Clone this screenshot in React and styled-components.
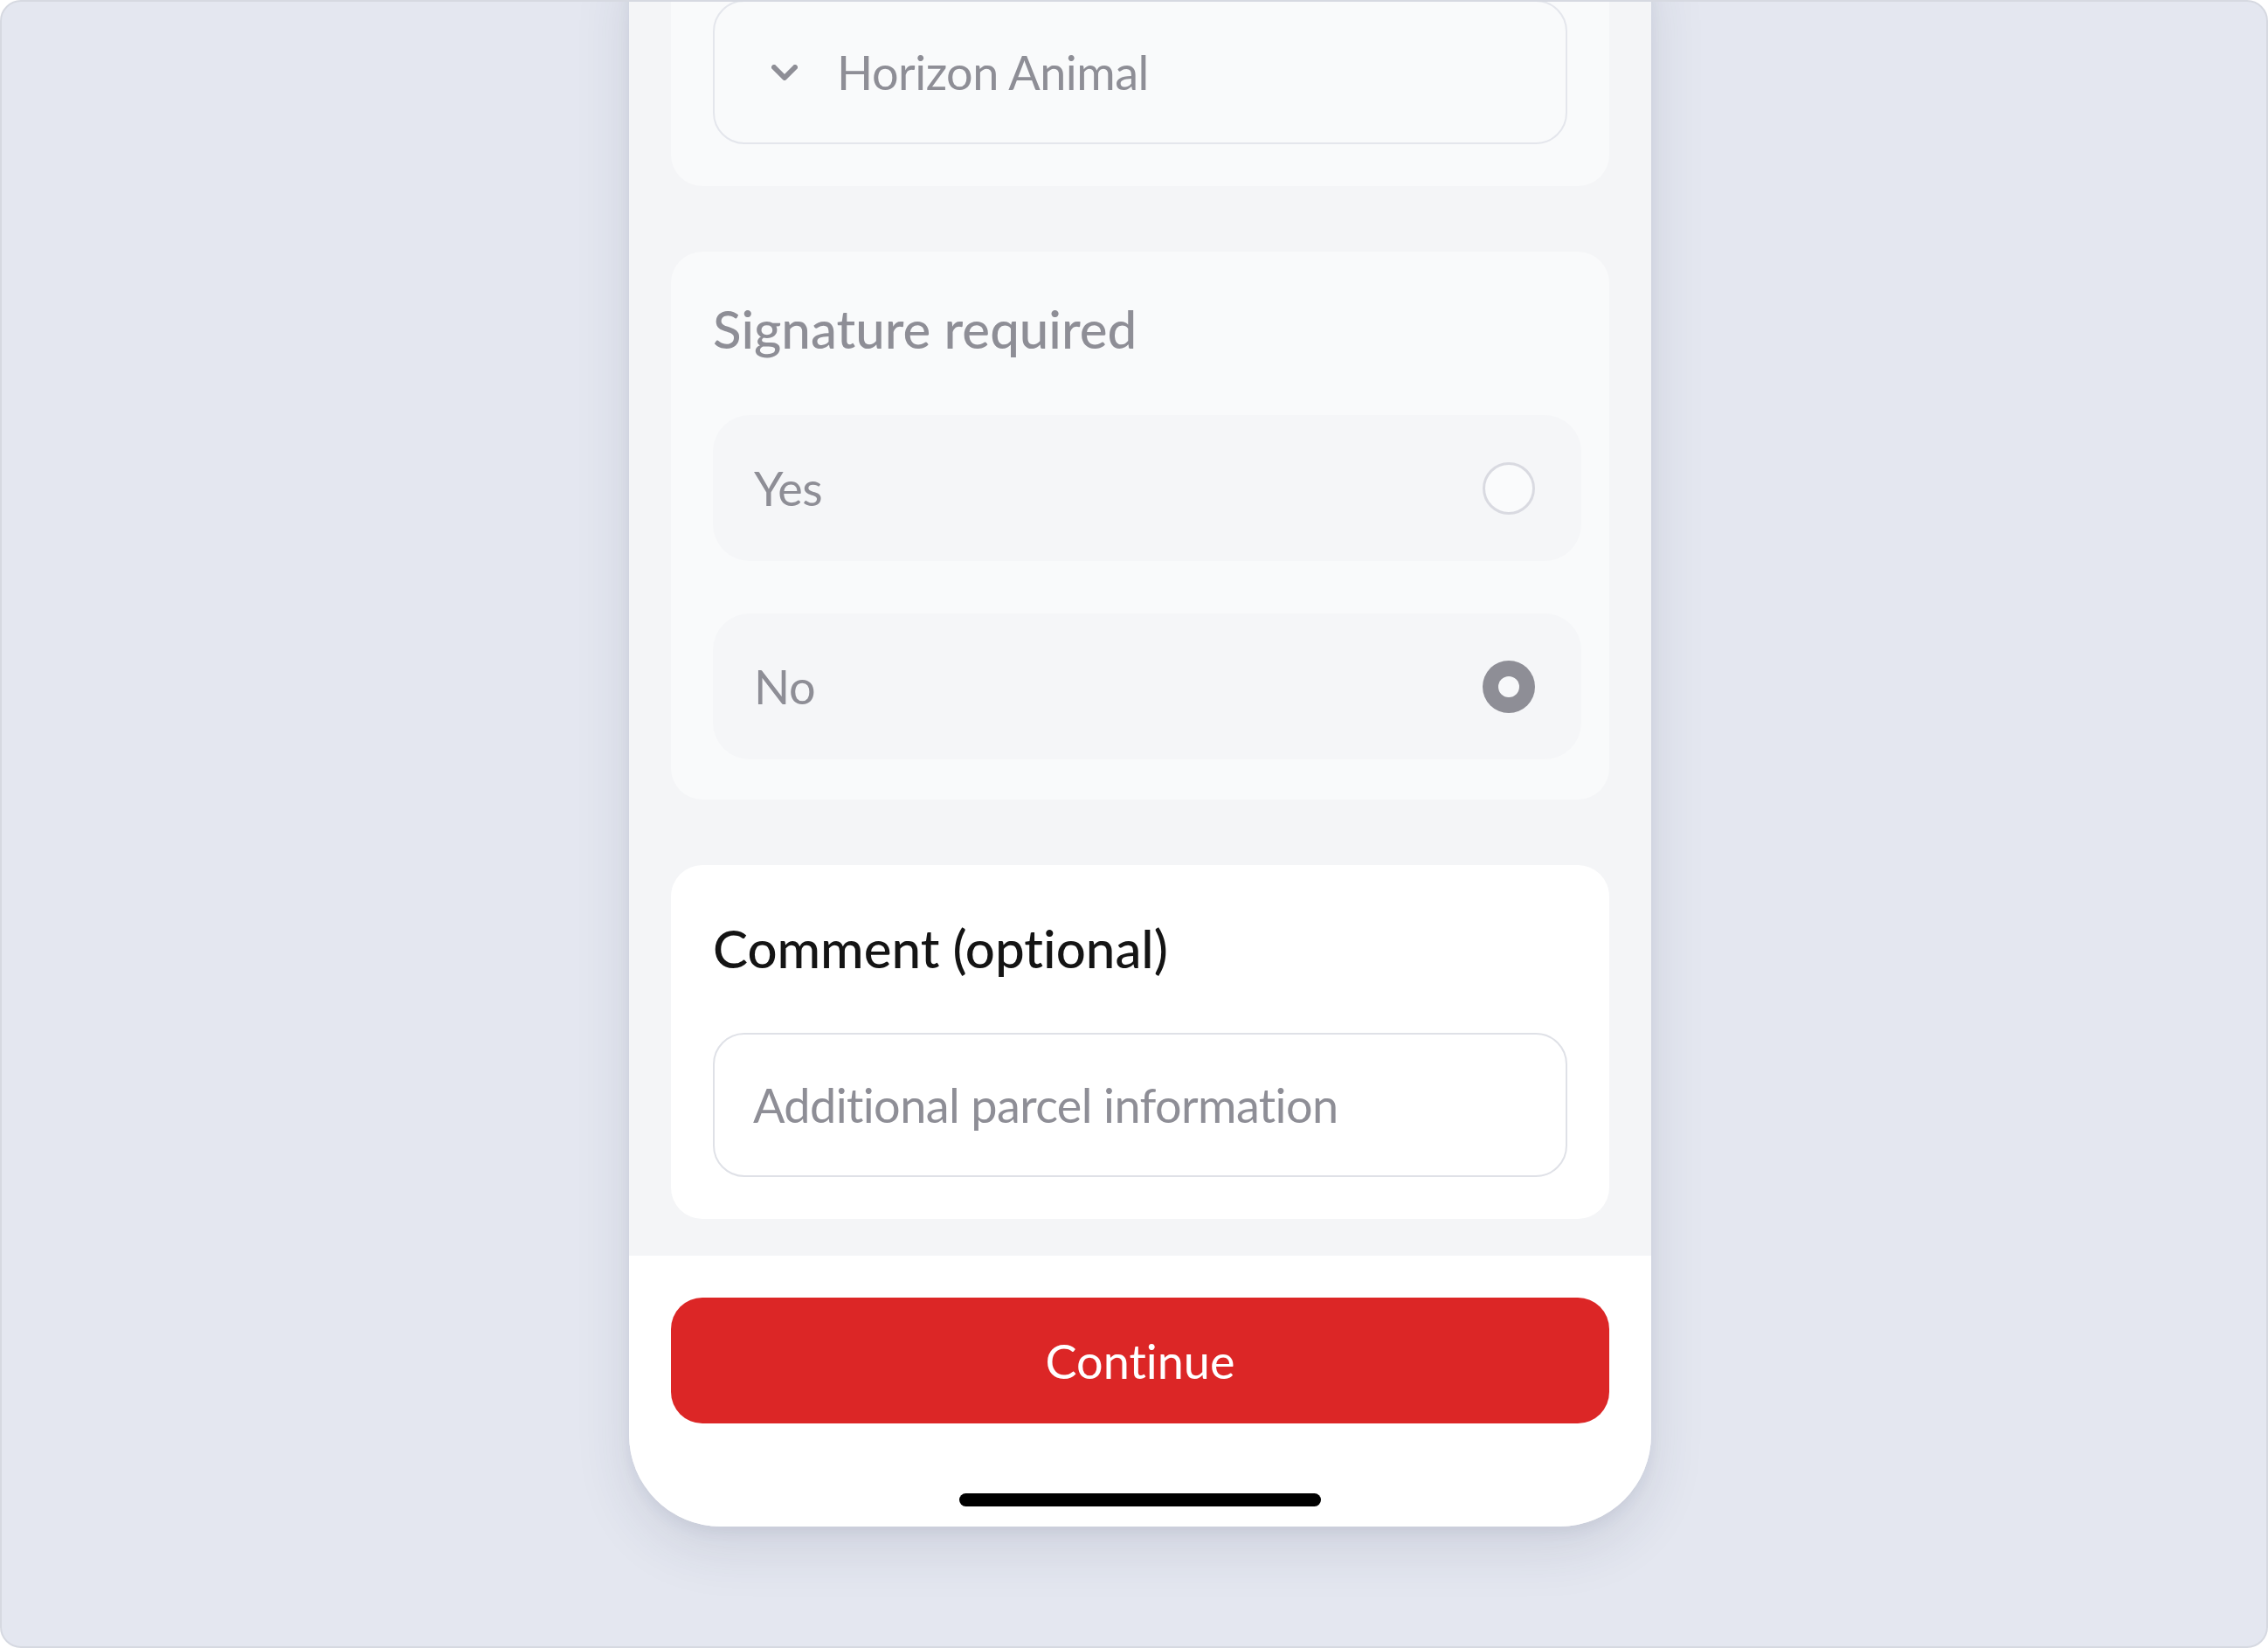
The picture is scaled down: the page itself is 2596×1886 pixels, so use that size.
import React from "react";
import styled, { createGlobalStyle } from "styled-components";

const GlobalStyle = createGlobalStyle`
  html, body {
    margin: 0;
    padding: 0;
    background: #ffffff;
  }
  * {
    box-sizing: border-box;
  }
  body {
    font-family: "Lato", "Liberation Sans", sans-serif;
    font-variant-ligatures: none;
  }
`;

const Frame = styled.div`
  height: 100vh;
  border: 2px solid #d6d9e1;
  border-radius: 24px;
  background: #e4e7f0;
  overflow: hidden;
  display: flex;
  flex-direction: column;
  justify-content: flex-end;
  align-items: center;
  padding: 0 0 137px 14px;
`;

const Phone = styled.div`
  width: 1170px;
  flex-shrink: 0;
  display: flex;
  flex-direction: column;
  background: #f4f5f7;
  border-radius: 0 0 105px 105px;
  overflow: hidden;
  box-shadow: 0 24px 64px rgba(40, 50, 80, 0.12), 0 6px 16px rgba(40, 50, 80, 0.06);
`;

const Content = styled.div`
  display: flex;
  flex-direction: column;
  gap: 75px;
  padding: 0 48px 42px;
`;

const Card = styled.section`
  display: flex;
  flex-direction: column;
  border-radius: 36px;
  background: ${(p) => (p.$muted ? "#f9fafb" : "#ffffff")};
  padding: ${(p) => p.$pad || "48px"};
`;

const CardTitle = styled.h2`
  margin: 0 0 ${(p) => p.$gap || "61px"};
  font-size: 60px;
  line-height: 72px;
  font-weight: 500;
  color: ${(p) => (p.$muted ? "#8e8e96" : "#141414")};
`;

const Select = styled.div`
  height: 165px;
  display: flex;
  align-items: center;
  gap: 45px;
  padding-left: 65px;
  border: 2px solid #e4e6ec;
  border-radius: 36px;
  background: #f9fafb;
  font-size: 54px;
  letter-spacing: -0.5px;
  color: #8e8e96;
`;

const Chevron = styled.svg`
  width: 30px;
  height: 18px;
  flex-shrink: 0;
`;

const Options = styled.div`
  display: flex;
  flex-direction: column;
  gap: 60px;
`;

const Option = styled.label`
  height: 167px;
  display: flex;
  align-items: center;
  justify-content: space-between;
  padding: 0 53px 0 47px;
  border-radius: 42px;
  background: #f5f6f8;
  font-size: 54px;
  letter-spacing: -0.5px;
  color: #8e8e96;
`;

const Radio = styled.span`
  width: 60px;
  height: 60px;
  border-radius: 50%;
  display: flex;
  align-items: center;
  justify-content: center;
  background: ${(p) => (p.$checked ? "#8e8e96" : "#fafbfc")};
  border: ${(p) => (p.$checked ? "none" : "3px solid #d9dae1")};
  &::after {
    content: "";
    display: ${(p) => (p.$checked ? "block" : "none")};
    width: 24px;
    height: 24px;
    border-radius: 50%;
    background: #f7f8fa;
  }
`;

const TextInput = styled.input`
  height: 165px;
  width: 100%;
  padding: 0 0 0 44px;
  border: 2px solid #dfe1e7;
  border-radius: 36px;
  background: #ffffff;
  font-family: "Lato", "Liberation Sans", sans-serif;
  font-variant-ligatures: none;
  font-size: 54px;
  letter-spacing: -0.6px;
  color: #141414;
  outline: none;
  &::placeholder {
    color: #8e8e96;
  }
`;

const Footer = styled.footer`
  display: flex;
  flex-direction: column;
  align-items: center;
  padding: 48px 48px 23px;
  background: #ffffff;
`;

const Button = styled.button`
  width: 100%;
  height: 144px;
  border: none;
  border-radius: 36px;
  background: #dc2626;
  color: #ffffff;
  font-family: "Lato", "Liberation Sans", sans-serif;
  font-variant-ligatures: none;
  font-size: 54px;
  font-weight: 400;
`;

const HomeBar = styled.div`
  width: 414px;
  height: 15px;
  margin-top: 80px;
  border-radius: 8px;
  background: #000000;
`;

export default function App() {
  return (
    <>
      <GlobalStyle />
      <Frame>
        <Phone>
          <Content>
            <Card $muted>
              <Select>
                <Chevron viewBox="0 0 30 18" fill="none">
                  <polyline
                    points="3,3 15,15 27,3"
                    stroke="#8e8e96"
                    strokeWidth="6"
                    strokeLinecap="round"
                    strokeLinejoin="round"
                  />
                </Chevron>
                <span>Horizon Animal</span>
              </Select>
            </Card>
            <Card $muted $pad="52px 32px 46px 48px">
              <CardTitle $muted $gap="63px">Signature required</CardTitle>
              <Options>
                <Option>
                  <span>Yes</span>
                  <Radio />
                </Option>
                <Option>
                  <span>No</span>
                  <Radio $checked />
                </Option>
              </Options>
            </Card>
            <Card $pad="59px 48px 48px">
              <CardTitle>Comment (optional)</CardTitle>
              <TextInput placeholder="Additional parcel information" />
            </Card>
          </Content>
          <Footer>
            <Button>Continue</Button>
            <HomeBar />
          </Footer>
        </Phone>
      </Frame>
    </>
  );
}
